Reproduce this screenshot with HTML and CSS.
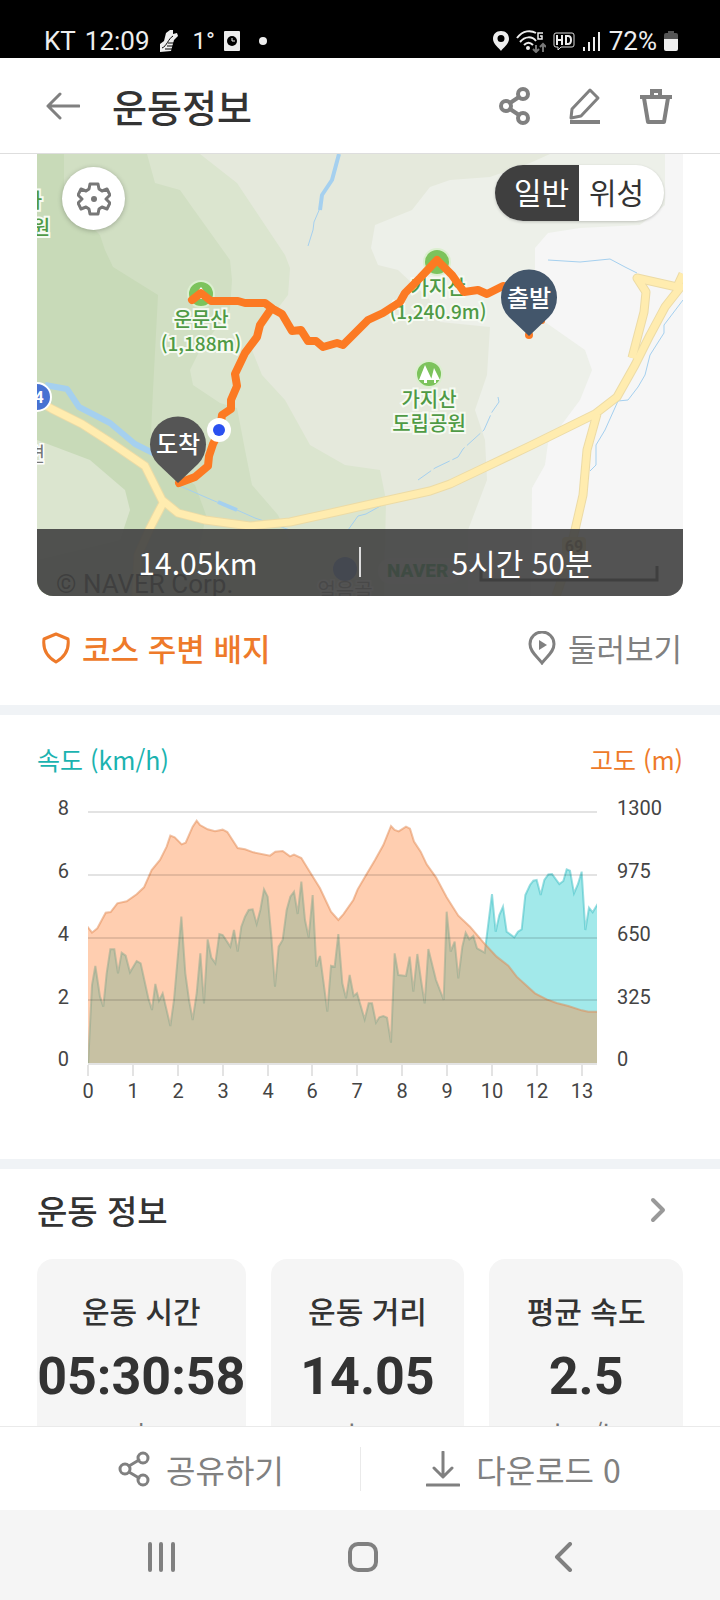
FILE: index.html
```
<!DOCTYPE html>
<html lang="ko">
<head>
    <meta charset="UTF-8">
    <meta name="viewport" content="width=device-width, initial-scale=1.0">
    <title>운동정보</title>
    <link rel="stylesheet" href="styles.css">
</head>
<body>
    <div class="status-bar">
        <div class="status-group">
            <span>KT</span>
            <span>12:09</span>
            <svg class="shoe" width="20" height="24" viewBox="0 0 20 24">
                <path d="M1 15 L5 12 L7 4 L11 1 L14 1 L14 5 L18 4 L19 7 L15 11 L12 22 L1 23 Z" fill="#eee"/>
                <path d="M3 19 C8 17 9 10 14 7 M9 14 h8 M8 17 h7 M6 20 h9" stroke="#000" fill="none"/>
            </svg>
            <span class="temp">1°</span>
            <svg width="16" height="20" viewBox="0 0 16 20">
                <rect width="16" height="20" rx="1" fill="#eee"/>
                <circle cx="8" cy="10" r="5" fill="#000"/>
                <path d="M8 7 v3 h3" stroke="#eee" fill="none"/>
            </svg>
            <span class="dot"></span>
        </div>
        <div class="status-group right">
            <svg width="16" height="20" viewBox="0 0 16 20">
                <path d="M8 0 C3 0 0 3 0 8 C0 13 6 17 8 20 C10 17 16 13 16 8 C16 3 13 0 8 0 Z M8 4 a3 3 0 1 1 0 7 a3 3 0 1 1 0 -7 Z" fill="#eee" fill-rule="evenodd"/>
            </svg>
            <svg width="30" height="23" viewBox="0 0 30 23">
                <g fill="none" stroke="#eee" stroke-width="2">
                    <path d="M1 8 C7 0 15 0 20 3"/>
                    <path d="M4 12 C9 6 16 6 20 11"/>
                    <path d="M8 15 C11 12 14 12 17 15"/>
                    <path d="M27 3 h-5 v6 h4 v-3 h-2" stroke-width="1.5"/>
                </g>
                <circle cx="12" cy="18" r="2" fill="#eee"/>
                <path d="M20 15 v7 m-3 -3 l3 3 l3 -3 M27 22 v-8 m-3 3 l3 -3 l3 3" fill="none" stroke="#777" stroke-width="2"/>
            </svg>
            <svg width="22" height="20" viewBox="0 0 22 20">
                <path d="M3 2 h16 q2 0 2 2 v10 q0 2 -2 2 h-11 l-3 3 v-3 h-2 q-2 0 -2 -2 v-10 q0 -2 2 -2 Z" fill="none" stroke="#ddd"/>
                <path d="M4 4 v10 M9 4 v10 M4 9 h5 M13 5 v8 h2 q3 0 3 -4 t-3 -4 Z" fill="none" stroke="#eee" stroke-width="2"/>
            </svg>
            <svg width="20" height="20" viewBox="0 0 20 20">
                <path d="M2 16 v4 M7 11 v9 M12 6 v14 M17 1 v19" stroke="#eee" stroke-width="2"/>
            </svg>
            <span class="percent">72%</span>
            <svg width="14" height="20" viewBox="0 0 14 20">
                <path d="M4 0 h6 v2 h2 q2 0 2 2 v4 h-14 v-4 q0 -2 2 -2 h2 Z" fill="#555"/>
                <path d="M0 8 h14 v10 q0 2 -2 2 h-10 q-2 0 -2 -2 Z" fill="#eee"/>
            </svg>
        </div>
    </div>

    <header class="header">
        <button class="icon-button" aria-label="뒤로">
            <svg width="34" height="28" viewBox="0 0 34 28"><path d="M33 14 H2 M14 2 L2 14 L14 26" stroke-width="3"/></svg>
        </button>
        <h1>운동정보</h1>
        <button class="icon-button" aria-label="공유">
            <svg width="32" height="38" viewBox="0 0 32 38">
                <g stroke-width="4"><circle cx="25" cy="7" r="5"/><circle cx="8" cy="19" r="5"/><circle cx="25" cy="31" r="5"/></g>
                <path d="M12 16 L21 10 M12 22 L21 28" stroke-width="4"/>
            </svg>
        </button>
        <button class="icon-button" aria-label="편집">
            <svg width="32" height="38" viewBox="0 0 32 38">
                <path d="M21 3 L29 11 L12 29 L2 31 L3 22 Z" stroke-width="3"/>
                <path class="butt" d="M1 35 H31" stroke-width="4"/>
            </svg>
        </button>
        <button class="icon-button" aria-label="삭제">
            <svg width="32" height="38" viewBox="0 0 32 38">
                <path class="butt" d="M0 10 H32 M12 9 V4 H20 V9" stroke-width="4"/>
                <path d="M4 11 L8 35 H24 L28 11" stroke-width="4"/>
            </svg>
        </button>
    </header>

    <main>
        <section class="map-section">
            <div class="map">
                <svg class="map-canvas" viewBox="37 154 646 442" preserveAspectRatio="xMidYMid slice">
                    <!-- terrain -->
                    <rect x="37" y="154" width="646" height="442" fill="#e5e9dc"/>
                    <path fill="#dbe5cf" d="M37 154 H200 L237 183 L285 255 L290 268 L288 295 L250 345 L262 375 L285 400 L310 445 L345 465 L380 470 L386 500 L384 596 H37 Z"/>
                    <path fill="#d1dfc3" d="M37 154 H147 L155 183 L180 190 L192 207 L230 260 L232 280 L230 310 L200 350 L190 370 L193 385 L220 403 L237 408 L245 450 L252 485 L278 515 L290 540 V596 H37 Z"/>
                    <path fill="#c8dab8" d="M37 154 H64 V180 L100 235 L105 250 L113 267 L158 295 L153 390 L150 455 L195 485 L206 515 L190 596 H37 Z"/>
                    <path fill="#d1dfc3" d="M64 154 H147 V200 L100 235 L64 200 Z"/>
                    <path fill="#dbe5cf" d="M37 440 L90 460 L125 490 L130 510 L120 540 L37 560 Z"/>
                    <path fill="#edf0e9" d="M550 154 L530 163 L490 177 L450 180 L430 187 L412 210 L375 225 L371 248 L378 265 L398 270 L430 300 L440 322 L490 327 L487 375 L475 410 L485 440 L487 480 L468 530 V596 H683 V154 Z"/>
                    <path fill="#f6f6f6" d="M665 154 V205 L640 225 L580 228 L548 233 L535 248 V315 L585 350 L592 370 L580 400 L548 443 L545 465 L532 488 L531 596 H683 V154 Z"/>
                    <!-- streams -->
                    <g fill="none" stroke="#a5d0ef" stroke-linejoin="round">
                        <path stroke-width="4" d="M339 154 L332 180 L322 195 L320 210"/>
                        <path stroke-width="1" d="M320 208 L314 222 L313 230 L308 246"/>
                        <path stroke-width="6" d="M45 385 L67 389 L79 407 L110 423 L135 444 L155 454"/>
                        <path stroke-width="1" d="M180 486 L212 500 L237 510 L255 518 L290 530"/>
                        <path stroke-width="4" d="M218 502 L237 510"/>
                        <path d="M548 260 L580 262 L610 259 L625 267 L637 273"/>
                        <path d="M683 300 L664 325 V333 L650 355 L645 375 L638 387 L628 400 L618 401 L605 430 L596 445 V465 L590 471"/>
                        <path d="M498 397 L499 402 L492 412 L484 430 L463 449 L458 457 L435 468 L418 480" stroke-dasharray="18 3"/>
                        <path d="M348 530 L358 516 L366 514 L384 504"/>
                    </g>
                    <!-- roads -->
                    <defs>
                        <g id="roads">
                            <path d="M37 400 L52 409 L82 424 L110 442 L145 466 L152 480 L162 500 L178 513 L205 520 L250 526 L290 522 L340 511 L380 502 L430 491 L450 484 L490 465 L530 446 L595 414 L617 397 L635 365 L650 335 L665 307 L683 284"/>
                            <path d="M163 503 L150 528 L138 555 L136 596"/>
                            <path d="M597 414 L587 450 L583 495 L575 530 L565 570 L556 596"/>
                            <path d="M683 274 L677 287 L637 278 L646 292 L644 312 L632 358"/>
                        </g>
                    </defs>
                    <use href="#roads" class="road-edge"/>
                    <use href="#roads" class="road"/>
                    <!-- places -->
                    <circle cx="37" cy="397" r="14" fill="#4872d2" stroke="#fff" stroke-width="2"/>
                    <text x="39" y="403" class="road-no">4</text>
                    <g class="place">
                        <text x="33" y="208">가</text>
                        <text x="41" y="235">원</text>
                        <circle cx="201" cy="294" r="13"/>
                        <path d="M192 299 L201 287 L210 299 Z" class="glyph"/>
                        <text x="201" y="327">운문산</text>
                        <text x="201" y="351" class="height">(1,188m)</text>
                        <circle cx="437" cy="262" r="13"/>
                        <text x="438" y="295">가지산</text>
                        <text x="438" y="319" class="height">(1,240.9m)</text>
                        <circle cx="429" cy="374" r="13"/>
                        <path d="M425 365 L432 380 H427 V383 H424 V380 H419 Z M434 368 L440 380 H436 V383 H434 V380 H431 Z" class="glyph"/>
                        <text x="429" y="407">가지산</text>
                        <text x="429" y="431">도립공원</text>
                    </g>
                    <text x="36" y="462" class="town">면</text>
                    <text x="345" y="598" class="town">얼음골</text>
                    <circle cx="345" cy="569" r="12" fill="#4872d2"/>
                    <rect x="562" y="537" width="24" height="18" rx="4" fill="#ffe28a"/>
                    <text x="574" y="552" class="sign">69</text>
                    <rect x="378" y="558" width="84" height="26" rx="13" fill="#fff" opacity="0.4"/>
                    <text x="387" y="577" class="naver">NAVER</text>
                    <text x="56" y="593" class="copyright">© NAVER Corp.</text>
                    <path d="M481 566 V580 H657 V566" fill="none" stroke="#000" stroke-width="3"/>
                    <!-- route -->
                    <g fill="none" stroke="#fc7a23" stroke-linejoin="round" stroke-linecap="round">
                        <path stroke-width="8" d="M192 300 L201 293 L211 301 L238 301 L245 303 L265 303 L273 309 L282 314 L292 331 L301 330 L308 341 L316 341 L323 347 L337 343 L343 345 L368 320 L383 313 L400 302 L405 293 L420 278 L437 260 L452 275 L464 292 L478 290 L487 294 L503 286 L520 290"/>
                        <path stroke-width="8" d="M271 309 L260 325 L257 337 L245 353 L235 374 L237 386 L231 400 L231 409 L222 415 L220 430 L213 444 L209 456 L208 466 L195 477 L179 483"/>
                    </g>
                    <circle cx="542" cy="321" r="3" fill="#fc7a23"/>
                    <circle cx="529" cy="335" r="4" fill="#fc7a23"/>
                    <circle cx="219" cy="430" r="12" fill="#fff"/>
                    <circle cx="219" cy="430" r="6" fill="#2b50f0"/>
                    <!-- pins -->
                    <path fill="#555" d="M178 483 L158 464 A28 28 0 1 1 198 464 Z"/>
                    <text x="178" y="453" class="pin-text">도착</text>
                    <path fill="#43566b" d="M529 336 L509 317 A28 28 0 1 1 549 317 Z"/>
                    <text x="529" y="307" class="pin-text">출발</text>
                </svg>
                <button class="settings" aria-label="지도 설정">
                    <svg width="34" height="34" viewBox="0 0 34 34">
                        <path d="M13 2 H21 L22 7 L25 9 L30 7 L33 13 L29 17 L33 21 L30 27 L25 25 L22 27 L21 32 H13 L12 27 L9 25 L4 27 L1 21 L5 17 L1 13 L4 7 L9 9 L12 7 Z" fill="none" stroke="#777" stroke-width="3" stroke-linejoin="round"/>
                        <circle cx="17" cy="17" r="3" fill="#777"/>
                    </svg>
                </button>
                <div class="map-type">
                    <button class="active">일반</button>
                    <button>위성</button>
                </div>
                <div class="map-summary">
                    <span>14.05km</span>
                    <span>5시간 50분</span>
                </div>
            </div>
            <div class="course-links">
                <a href="#" class="badge-link">
                    <svg width="28" height="32" viewBox="0 0 28 32"><path d="M14 2 L26 7 Q28 22 14 30 Q0 22 2 7 Z" fill="none" stroke="currentColor" stroke-width="3" stroke-linejoin="round"/></svg>
                    코스 주변 배지
                </a>
                <a href="#" class="tour-link">
                    <svg width="28" height="34" viewBox="0 0 28 34">
                        <path d="M14 32 C9 25 2 21 2 13 A12 12 0 0 1 26 13 C26 21 19 25 14 32 Z" fill="none" stroke="currentColor" stroke-width="3"/>
                        <path d="M11 9 L19 14 L11 19 Z" fill="currentColor"/>
                    </svg>
                    둘러보기
                </a>
            </div>
        </section>

        <section class="chart-section">
            <div class="legend">
                <span class="speed">속도 (km/h)</span>
                <span class="altitude">고도 (m)</span>
            </div>
            <svg class="chart" viewBox="37 790 646 320">
                <svg x="88" y="812" width="509" height="251" viewBox="0 0 1527 753" preserveAspectRatio="none">
                    <polygon class="area-speed" points="0,760 12,519 22,462 36,554 46,584 56,484 67,412 79,412 90,484 101,422 113,431 126,481 146,447 158,454 181,559 192,594 202,516 213,566 224,544 247,642 258,564 280,314 292,484 303,564 314,624 326,544 337,424 348,574 359,382 370,437 382,454 394,366 404,369 427,404 438,354 449,419 460,344 471,314 482,294 494,292 506,336 517,294 528,232 539,254 550,374 561,524 572,404 584,384 596,294 607,254 618,239 629,306 640,209 651,324 662,376 674,249 685,464 696,432 707,514 718,599 729,461 740,464 751,366 763,514 774,559 785,489 797,552 807,544 830,622 842,574 852,574 864,632 874,616 886,612 897,617 909,692 920,424 931,489 954,492 965,434 976,539 988,426 999,504 1010,574 1021,411 1044,504 1067,564 1076,299 1088,419 1100,389 1111,499 1123,404 1133,362 1144,382 1156,372 1167,409 1190,422 1201,334 1212,246 1223,359 1234,309 1245,284 1256,359 1279,376 1290,359 1301,352 1312,249 1326,219 1336,206 1346,204 1358,249 1369,204 1381,187 1392,186 1414,216 1426,207 1436,172 1446,176 1458,244 1470,216 1481,179 1492,354 1503,287 1514,301 1527,279 1540,260 1540,760"/>
                    <polygon class="area-altitude" points="-9,760 -9,336 0,346 12,362 28,349 53,302 68,300 88,274 116,268 146,247 168,226 191,174 216,144 236,104 247,71 260,76 281,97 293,92 314,44 326,26 336,39 359,52 381,58 404,53 418,60 449,108 471,112 496,121 546,131 562,119 584,117 606,133 618,128 640,138 662,174 696,229 729,299 751,324 766,307 796,264 809,232 836,186 861,144 886,99 909,42 920,54 932,58 954,44 966,50 978,89 998,119 1016,157 1044,196 1076,256 1111,311 1146,344 1186,391 1226,434 1261,461 1286,494 1341,544 1376,562 1406,573 1441,582 1481,595 1501,599 1540,599 1540,760"/>
                </svg>
                <path class="grid" d="M88 812 H597 M88 875 H597 M88 938 H597 M88 1000 H597 M88 1064 H597"/>
                <path class="ticks" d="M88 1065 V1076 M133 1065 V1076 M178 1065 V1076 M223 1065 V1076 M268 1065 V1076 M312 1065 V1076 M357 1065 V1076 M402 1065 V1076 M447 1065 V1076 M492 1065 V1076 M537 1065 V1076 M582 1065 V1076"/>
                <g class="labels">
                    <g text-anchor="end">
                        <text x="69" y="815">8</text>
                        <text x="69" y="878">6</text>
                        <text x="69" y="941">4</text>
                        <text x="69" y="1004">2</text>
                        <text x="69" y="1066">0</text>
                    </g>
                    <g>
                        <text x="617" y="815">1300</text>
                        <text x="617" y="878">975</text>
                        <text x="617" y="941">650</text>
                        <text x="617" y="1004">325</text>
                        <text x="617" y="1066">0</text>
                    </g>
                    <g text-anchor="middle">
                        <text x="88" y="1098">0</text>
                        <text x="133" y="1098">1</text>
                        <text x="178" y="1098">2</text>
                        <text x="223" y="1098">3</text>
                        <text x="268" y="1098">4</text>
                        <text x="312" y="1098">6</text>
                        <text x="357" y="1098">7</text>
                        <text x="402" y="1098">8</text>
                        <text x="447" y="1098">9</text>
                        <text x="492" y="1098">10</text>
                        <text x="537" y="1098">12</text>
                        <text x="582" y="1098">13</text>
                    </g>
                </g>
            </svg>
        </section>

        <section class="info-section">
            <div class="info-title">
                <h2>운동 정보</h2>
                <button class="icon-button" aria-label="더보기">
                    <svg class="chevron" width="16" height="26" viewBox="0 0 16 26"><path d="M3 3 L13 13 L3 23" stroke-width="4"/></svg>
                </button>
            </div>
            <div class="cards">
                <div class="card">
                    <h3>운동 시간</h3>
                    <strong>05:30:58</strong>
                    <span>초</span>
                </div>
                <div class="card">
                    <h3>운동 거리</h3>
                    <strong>14.05</strong>
                    <span>km</span>
                </div>
                <div class="card">
                    <h3>평균 속도</h3>
                    <strong>2.5</strong>
                    <span>km/h</span>
                </div>
            </div>
        </section>
    </main>

    <div class="action-bar">
        <button>
            <svg width="32" height="36" viewBox="0 0 32 36">
                <g stroke-width="3"><circle cx="25" cy="7" r="5"/><circle cx="7" cy="18" r="5"/><circle cx="25" cy="29" r="5"/></g>
                <path d="M11 15 L21 9 M11 21 L21 27" stroke-width="3"/>
            </svg>
            공유하기
        </button>
        <button>
            <svg width="34" height="36" viewBox="0 0 34 36">
                <path d="M17 1 V25 M8 17 L17 26 L26 17 M1 34 H33" stroke-width="3"/>
            </svg>
            다운로드 0
        </button>
    </div>

    <nav class="nav-bar">
        <button class="icon-button" aria-label="최근 앱">
            <svg width="30" height="30" viewBox="0 0 30 30"><path d="M3 2 V28 M14 2 V28 M26 2 V28" stroke-width="4"/></svg>
        </button>
        <button class="icon-button" aria-label="홈">
            <svg width="30" height="30" viewBox="0 0 30 30"><rect x="2" y="2" width="26" height="26" rx="8" stroke-width="4"/></svg>
        </button>
        <button class="icon-button" aria-label="뒤로 가기">
            <svg width="30" height="30" viewBox="0 0 30 30"><path d="M22 2 L9 15 L22 28" stroke-width="4"/></svg>
        </button>
    </nav>
</body>
</html>
```
FILE: styles.css
```
:root {
    --text-color: #333;
    --icon-color: #808080;
    --orange: #ee7a2a;
    --teal: #1bb3b0;
    --divider: #f0f3f6;
    --side: 37px;
}

* {
    box-sizing: border-box;
    margin: 0;
    padding: 0;
}

body {
    display: flex;
    flex-direction: column;
    height: 100vh;
    overflow: hidden;
    background: #fff;
    color: var(--text-color);
    font-family: "Noto Sans CJK KR", sans-serif;
}

button {
    border: none;
    background: none;
    color: inherit;
    font-family: inherit;
    cursor: pointer;
}

a {
    color: inherit;
    text-decoration: none;
}

svg {
    display: block;
    flex-shrink: 0;
}

/* Status bar */
.status-bar {
    display: flex;
    justify-content: space-between;
    flex-shrink: 0;
    height: 58px;
    padding: 23px 42px 0 44px;
    background: #000;
    color: #eee;
    font-family: Roboto, sans-serif;
    font-size: 26px;
    line-height: 36px;
}

.status-group {
    display: flex;
    align-items: center;
    gap: 9px;
    height: 36px;
}

.status-group.right {
    gap: 7px;
}

.temp {
    margin-left: 5px;
    font-size: 24px;
}

.percent {
    font-size: 26px;
}

.dot {
    width: 8px;
    height: 8px;
    margin-left: 10px;
    border-radius: 50%;
    background: #eee;
}

/* Header */
.header {
    display: flex;
    align-items: center;
    flex-shrink: 0;
    gap: 39px;
    height: 96px;
    padding: 0 48px 0 46px;
    border-bottom: 1px solid #dedede;
}

.header h1 {
    flex: 1;
    margin-left: -7px;
    font-size: 38px;
    font-weight: 500;
    line-height: 48px;
}

.icon-button svg,
.action-bar svg {
    fill: none;
    stroke: var(--icon-color);
    stroke-linecap: round;
    stroke-linejoin: round;
}

.icon-button .butt {
    stroke-linecap: butt;
    stroke-linejoin: miter;
}

.icon-button .chevron {
    stroke: #999;
}

main {
    flex: 1;
    min-height: 0;
    overflow: hidden;
}

/* Map */
.map-section {
    padding: 0 var(--side);
    border-bottom: 10px solid var(--divider);
}

.map {
    position: relative;
    height: 442px;
    border-radius: 0 0 16px 16px;
    overflow: hidden;
}

.map-canvas {
    width: 100%;
    height: 100%;
}

.road-edge,
.road {
    fill: none;
    stroke: #ecdba6;
    stroke-width: 9px;
    stroke-linejoin: round;
}

.road {
    stroke: #ffecaf;
    stroke-width: 7px;
}

.place text {
    fill: #4f9a45;
    stroke: #f6faf2;
    stroke-width: 4px;
    paint-order: stroke;
    font-size: 20px;
    font-weight: 500;
    text-anchor: middle;
}

.place .height {
    font-size: 19px;
}

.place circle {
    fill: #7cc35c;
    stroke: #dcefd0;
    stroke-width: 2px;
}

.place .glyph {
    fill: #fff;
}

.road-no,
.sign {
    fill: #fff;
    font: bold 16px Roboto, sans-serif;
    text-anchor: middle;
}

.sign {
    fill: #705520;
}

.town {
    fill: #777;
    stroke: #fff;
    stroke-width: 3px;
    paint-order: stroke;
    font-size: 20px;
    text-anchor: middle;
}

.naver {
    fill: #0a9b3c;
    font: 900 19px Roboto, sans-serif;
}

.copyright {
    font: 26px Roboto, sans-serif;
}

.pin-text {
    fill: #fff;
    font-size: 24px;
    font-weight: 500;
    text-anchor: middle;
}

.settings {
    position: absolute;
    top: 13px;
    left: 25px;
    display: flex;
    align-items: center;
    justify-content: center;
    width: 63px;
    height: 63px;
    border-radius: 50%;
    background: #fff;
    box-shadow: 0 1px 5px rgba(0, 0, 0, 0.25);
}

.map-type {
    position: absolute;
    top: 11px;
    right: 19px;
    display: flex;
    height: 56px;
    border-radius: 28px;
    background: #fff;
    overflow: hidden;
    box-shadow: 0 1px 3px rgba(0, 0, 0, 0.2);
}

.map-type button {
    width: 85px;
    padding: 0 12px 4px 10px;
    font-size: 30px;
    text-align: left;
}

.map-type .active {
    width: 84px;
    padding-left: 19px;
    padding-right: 8px;
    background: #3f3f3f;
    color: #fff;
}

.map-summary {
    position: absolute;
    right: 0;
    bottom: 0;
    left: 0;
    display: flex;
    align-items: center;
    height: 67px;
    padding-bottom: 2px;
    background: rgba(68, 68, 68, 0.92);
    color: #fff;
    font-size: 30px;
    line-height: 30px;
    text-align: center;
}

.map-summary span {
    flex: 1;
}

.map-summary span + span {
    border-left: 2px solid #ddd;
}

.course-links {
    display: flex;
    align-items: center;
    justify-content: space-between;
    height: 109px;
    padding: 0 1px 6px 5px;
}

.course-links a {
    display: flex;
    align-items: center;
    gap: 12px;
    font-size: 31px;
    line-height: 40px;
}

.badge-link {
    color: var(--orange);
    font-weight: 500;
}

.tour-link {
    color: var(--icon-color);
}

/* Chart */
.chart-section {
    height: 454px;
    padding: 26px var(--side) 0;
    border-bottom: 10px solid var(--divider);
}

.legend {
    display: flex;
    justify-content: space-between;
    height: 49px;
    font-size: 25px;
    line-height: 36px;
}

.speed {
    color: var(--teal);
}

.altitude {
    color: var(--orange);
}

.chart {
    width: 100%;
}

.area-speed,
.area-altitude {
    fill: rgba(69, 211, 213, 0.5);
    stroke: rgba(60, 190, 195, 0.5);
    stroke-width: 2px;
    vector-effect: non-scaling-stroke;
}

.area-altitude {
    fill: rgba(255, 132, 57, 0.4);
    stroke: rgba(225, 135, 80, 0.5);
}

.grid,
.ticks {
    fill: none;
    stroke: rgba(0, 0, 0, 0.11);
    stroke-width: 2px;
}

.labels text {
    fill: #444;
    font-family: Roboto, sans-serif;
    font-size: 20px;
}

/* Workout info */
.info-section {
    padding: 17px var(--side) 0;
}

.info-title {
    display: flex;
    align-items: center;
    justify-content: space-between;
    height: 48px;
    padding-right: 17px;
}

h2 {
    font-size: 33px;
    font-weight: 500;
    line-height: 48px;
}

.cards {
    display: grid;
    grid-template-columns: 14fr 13fr 13fr;
    gap: 25px;
    margin-top: 25px;
}

.card {
    display: flex;
    flex-direction: column;
    align-items: center;
    height: 230px;
    padding-top: 31px;
    border-radius: 16px;
    background: #f5f5f5;
}

.card h3 {
    font-size: 30px;
    font-weight: 500;
    line-height: 40px;
}

.card strong {
    margin-top: 17px;
    font-family: Roboto, sans-serif;
    font-size: 52px;
    line-height: 60px;
}

.card span {
    margin-top: 6px;
    color: #777;
    font-size: 26px;
    line-height: 40px;
}

/* Bottom bars */
.action-bar {
    display: grid;
    grid-template-columns: 1fr 1fr;
    align-items: center;
    flex-shrink: 0;
    height: 84px;
    border-top: 1px solid #eaeaea;
    color: var(--icon-color);
}

.action-bar button {
    display: flex;
    align-items: center;
    justify-content: center;
    gap: 16px;
    height: 44px;
    padding-left: 42px;
    font-size: 32px;
}

.action-bar button + button {
    padding-left: 0;
    padding-right: 34px;
    border-left: 1px solid #eaeaea;
}

.nav-bar {
    display: flex;
    align-items: center;
    justify-content: space-between;
    flex-shrink: 0;
    height: 90px;
    padding: 4px 142px 0 147px;
    background: #f5f5f5;
}
```
